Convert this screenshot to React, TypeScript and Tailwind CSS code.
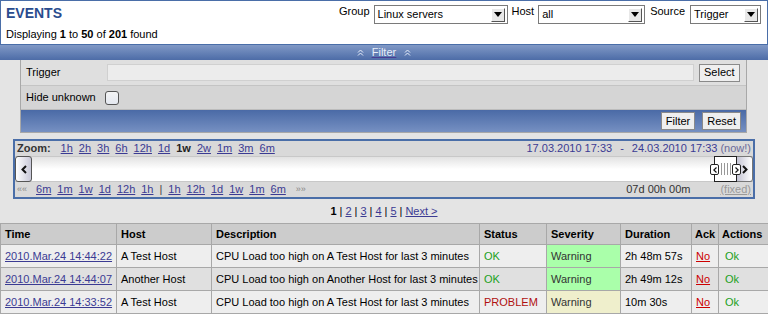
import React from "react";

const F = { fontFamily: '"Liberation Sans", Arial, sans-serif' };

function Sel({ w, text }: { w: string; text: string }) {
  return (
    <div className={`${w} h-[19px] flex items-center bg-white border border-[#7a7a7a] pl-[3px] pr-[2px]`}>
      <span className="flex-1 text-[11px] leading-none text-black">{text}</span>
      <div className="w-[14px] h-[14px] bg-[#e8e8e8] border border-t-white border-l-white border-r-[#555] border-b-[#555] flex items-center justify-center">
        <svg width="8" height="5" viewBox="0 0 8 5"><polygon points="0,0 8,0 4,5" fill="#000" /></svg>
      </div>
    </div>
  );
}

function DblUp() {
  return (
    <svg width="7" height="7" viewBox="0 0 7 7" className="inline-block">
      <polyline points="1,3.5 3.5,1 6,3.5" fill="none" stroke="#e8eefa" strokeWidth="1" />
      <polyline points="1,6.5 3.5,4 6,6.5" fill="none" stroke="#e8eefa" strokeWidth="1" />
    </svg>
  );
}

const L = "text-[#3b3b93] underline";

function Btn({ children, cls = "" }: { children: React.ReactNode; cls?: string }) {
  return (
    <div className={`h-[18px] px-[4px] flex items-center bg-[#efefef] border border-[#8a8a8a] text-[11px] leading-none text-black ${cls}`}>{children}</div>
  );
}

const rows = [
  { t: "2010.Mar.24 14:44:22", h: "A Test Host", d: "CPU Load too high on A Test Host for last 3 minutes", s: "OK", sev: "bg-[#aaffaa]", dur: "2h 48m 57s", bg: "bg-[#eeeeee]" },
  { t: "2010.Mar.24 14:44:07", h: "Another Host", d: "CPU Load too high on Another Host for last 3 minutes", s: "OK", sev: "bg-[#aaffaa]", dur: "2h 49m 12s", bg: "bg-[#e0e0e0]" },
  { t: "2010.Mar.24 14:33:52", h: "A Test Host", d: "CPU Load too high on A Test Host for last 3 minutes", s: "PROBLEM", sev: "bg-[#efefcc]", dur: "10m 30s", bg: "bg-[#eeeeee]" },
];

const td = "border border-[#a8a8a8] whitespace-nowrap";

export default function App() {
  return (
    <div className="w-[768px] h-[314px] bg-[#e4e4e4] overflow-hidden text-[11px] text-black" style={F}>
      {/* header */}
      <div className="h-[45px] bg-white border border-[#4a6ea8] flex justify-between">
        <div className="pl-[5px] pt-[4px]">
          <div className="text-[14px] font-bold text-[#2a4c8e] leading-[17px]">EVENTS</div>
          <div className="text-[11px] leading-[13px] mt-[6px]">
            Displaying <b>1</b> to <b>50</b> of <b>201</b> found
          </div>
        </div>
        <div className="flex items-start pt-[4px] pr-[6px] text-[11px]">
          <span className="mr-[4px] leading-[13px]">Group</span>
          <Sel w="w-[134px]" text="Linux servers" />
          <span className="ml-[4px] mr-[4px] leading-[13px]">Host</span>
          <Sel w="w-[107px]" text="all" />
          <span className="ml-[5px] mr-[5px] leading-[13px]">Source</span>
          <Sel w="w-[71px]" text="Trigger" />
        </div>
      </div>
      {/* filter bar */}
      <div className="h-[15px] bg-gradient-to-b from-[#8199c6] to-[#4d6ca7] flex items-center justify-center">
        <span className="flex items-center gap-[2px] text-[11px] leading-none text-[#e8eefa] underline decoration-[#4a3d94]">
          <DblUp />
          <span className="px-[6px] underline decoration-[#4a3d94]">Filter</span>
          <DblUp />
        </span>
      </div>
      {/* filter panel */}
      <div className="mx-[20px] w-[727px] border-l border-r border-b border-[#a8a8a8]">
        <div className="h-[26px] bg-[#dfdfdf] border-b border-[#c4c4c4] flex items-center pl-[5px] pr-[5px]">
          <span className="w-[81px]">Trigger</span>
          <div className="w-[587px] h-[17px] bg-[#ececec] border border-[#d0d0d0]" />
          <Btn cls="ml-[5px]">Select</Btn>
        </div>
        <div className="h-[24px] bg-[#d5d5d5] border-b border-[#bcbcbc] flex items-center pl-[5px]">
          <span className="w-[79px]">Hide unknown</span>
          <div className="w-[14px] h-[14px] rounded-[3px] border border-[#555] bg-gradient-to-b from-[#f4f4f4] to-[#e4e8f0]" />
        </div>
        <div className="h-[22px] bg-gradient-to-b from-[#4a6aa6] to-[#7690c2] flex items-center justify-end pr-[5px] gap-[7px]">
          <Btn>Filter</Btn>
          <Btn>Reset</Btn>
        </div>
      </div>
      {/* timeline */}
      <div className="mt-[6px] ml-[13px] w-[742px] h-[60px] border-2 border-[#4a6ea8] bg-[#d9d9d9] flex flex-col">
        <div className="h-[15px] flex items-center justify-between px-[2px] leading-none">
          <div className="flex items-center gap-[6px]">
            <b className="text-[#333] mr-[4px]">Zoom:</b>
            {["1h", "2h", "3h", "6h", "12h", "1d"].map((z) => (
              <span key={z} className={L}>{z}</span>
            ))}
            <b className="text-[#222]">1w</b>
            {["2w", "1m", "3m", "6m"].map((z) => (
              <span key={z} className={L}>{z}</span>
            ))}
          </div>
          <div className="flex items-center text-[#3b3b93]">
            <span>17.03.2010 17:33</span>
            <span className="mx-[8px]">-</span>
            <span>24.03.2010 17:33</span>
            <span className="ml-[3px] text-[#6a6a9a]">(now!)</span>
          </div>
        </div>
        <div className="h-[26px] bg-gradient-to-b from-[#e2e2e2] via-white to-white border-y border-[#c8c8c8] relative flex items-stretch">
          <div className="w-[17px] my-[-1px] rounded-[3px] border border-[#555] bg-gradient-to-r from-white to-[#c8c8d8] flex items-center justify-center">
            <svg width="6" height="9" viewBox="0 0 6 9"><polyline points="5,1 1.5,4.5 5,8" fill="none" stroke="#111" strokeWidth="2" /></svg>
          </div>
          <div className="flex-1" />
          <div className="w-[23px] my-[-1px] border border-[#222] bg-white flex items-center justify-center relative">
            <div className="flex gap-[2px]">
              {[0, 1, 2, 3].map((i) => (
                <div key={i} className="w-[1px] h-[12px] bg-[#999]" />
              ))}
            </div>
            <div className="absolute left-[-5px] top-[7px] w-[9px] h-[11px] bg-white border border-[#222] rounded-[2px] flex items-center justify-center">
              <svg width="4" height="6" viewBox="0 0 4 6"><polyline points="3.5,0.5 0.8,3 3.5,5.5" fill="none" stroke="#111" strokeWidth="1.2" /></svg>
            </div>
            <div className="absolute right-[-5px] top-[7px] w-[9px] h-[11px] bg-white border border-[#222] rounded-[2px] flex items-center justify-center">
              <svg width="4" height="6" viewBox="0 0 4 6"><polyline points="0.5,0.5 3.2,3 0.5,5.5" fill="none" stroke="#111" strokeWidth="1.2" /></svg>
            </div>
          </div>
          <div className="w-[16px] my-[-1px] rounded-r-[3px] border border-[#777] border-l-0 bg-gradient-to-r from-[#c4c4d4] to-white flex items-center justify-center">
            <svg width="6" height="9" viewBox="0 0 6 9"><polyline points="1,1 4.5,4.5 1,8" fill="none" stroke="#111" strokeWidth="2" /></svg>
          </div>
        </div>
        <div className="flex-1 flex items-center justify-between px-[2px] leading-none">
          <div className="flex items-center gap-[6px]">
            <span className="text-[#888] text-[9px] mr-[3px]">««</span>
            {["6m", "1m", "1w", "1d", "12h", "1h"].map((z) => (
              <span key={"a" + z} className={L}>{z}</span>
            ))}
            <span className="text-[#444]">|</span>
            {["1h", "12h", "1d", "1w", "1m", "6m"].map((z) => (
              <span key={"b" + z} className={L}>{z}</span>
            ))}
            <span className="text-[#888] text-[9px] ml-[4px]">»»</span>
          </div>
          <div className="flex items-center">
            <span className="text-[#333] mr-[30px]">07d 00h 00m</span>
            <span className="text-[#999] underline">(fixed)</span>
          </div>
        </div>
      </div>
      {/* pagination */}
      <div className="h-[24px] flex items-center justify-center gap-[3px]">
        <b>1</b><span>|</span><span className={L}>2</span><span>|</span><span className={L}>3</span><span>|</span>
        <span className={L}>4</span><span>|</span><span className={L}>5</span><span>|</span><span className={L}>Next &gt;</span>
      </div>
      {/* table */}
      <table className="w-[768px] border-collapse table-fixed text-[11px]">
        <colgroup>
          <col className="w-[116px]" />
          <col className="w-[95px]" />
          <col className="w-[268px]" />
          <col className="w-[67px]" />
          <col className="w-[74px]" />
          <col className="w-[71px]" />
          <col className="w-[27px]" />
          <col className="w-[50px]" />
        </colgroup>
        <thead>
          <tr className="h-[21px] bg-[#cccccc]">
            {["Time", "Host", "Description", "Status", "Severity", "Duration", "Ack", "Actions"].map((h) => (
              <th key={h} className={`${td} text-left font-bold ${h === "Ack" || h === "Actions" ? "px-[3px]" : "px-[4px]"}`}>{h}</th>
            ))}
          </tr>
        </thead>
        <tbody>
          {rows.map((r, i) => (
            <tr key={i} className={`h-[23px] ${r.bg}`}>
              <td className={`${td} px-[4px]`}><span className={L}>{r.t}</span></td>
              <td className={`${td} px-[4px]`}>{r.h}</td>
              <td className={`${td} px-[4px]`}>{r.d}</td>
              <td className={`${td} px-[4px] ${r.s === "OK" ? "text-[#22a022]" : "text-[#b01010]"}`}>{r.s}</td>
              <td className={`${td} px-[4px] text-[#333] ${r.sev}`}>Warning</td>
              <td className={`${td} px-[4px]`}>{r.dur}</td>
              <td className={`${td} px-[4px]`}><span className="text-[#cc0000] underline">No</span></td>
              <td className={`${td} px-[6px] text-[#22a022]`}>Ok</td>
            </tr>
          ))}
        </tbody>
      </table>
    </div>
  );
}
